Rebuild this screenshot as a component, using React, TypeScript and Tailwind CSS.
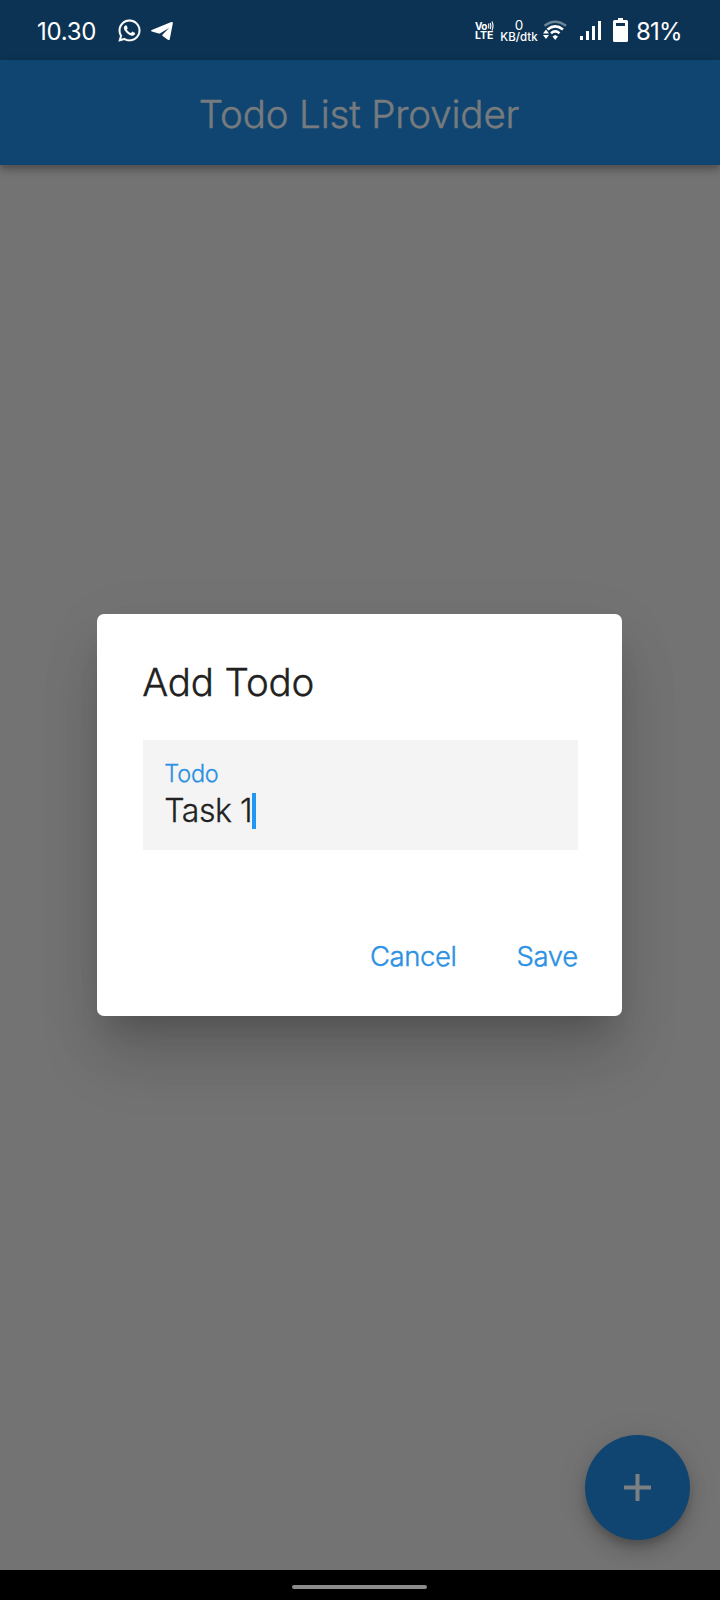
import { FaWhatsapp } from "react-icons/fa";

function StatusBar() {
  return (
    <div className="flex h-[60px] shrink-0 items-center bg-[#0c3353] pl-[37px] pt-[2px] text-white">
      <span className="mt-[2px] w-[80px] whitespace-nowrap text-[24px] leading-[28px] tracking-[-0.3px]">10.30</span>
      <FaWhatsapp className="-mt-[2px] size-[25px] shrink-0" stroke="currentColor" strokeWidth="4" />
      <svg className="ml-[9px] h-[20px] w-[23px] shrink-0" viewBox="0 0 23 20" fill="currentColor">
        <path d="M.7 9 20.300 1c1-.4 1.800.2 1.500 1.400l-3 15.500c-.2 1.200-1 1.500-2 .9l-5.200-3.900c-.5-.4-.5-.8 0-1.300l6.700-6.800-9 5.400q-.7.4-1.500.2L.8 10.500C0 10.200 0 9.300.7 9z" />
      </svg>
      <div className="ml-[301px] flex w-[20px] shrink-0 flex-col text-[10.500px] font-bold leading-[10px]">
        <svg className="h-[10px] w-[20px]" viewBox="0 0 20 10" fill="none" stroke="currentColor">
          <text x="0" y="8.700" fill="currentColor" stroke="none" fontSize="10" fontWeight="700" letterSpacing="-0.6">Vo</text>
          <path d="M13.700 2.500v5M15.300 2q1.300 3 0 6M17 .5q2 4.500 0 9" strokeWidth="1.100" />
        </svg>
        <span>LTE</span>
      </div>
      <div className="ml-[4px] flex w-[40px] shrink-0 flex-col items-center whitespace-nowrap">
        <span className="text-[13.500px] leading-[12px]">0</span>
        <span className="text-[11.500px] font-medium leading-[12px]">KB/dtk</span>
      </div>
      <svg className="ml-[4px] h-[22px] w-[26px] shrink-0" viewBox="0 0 26 22" fill="none" stroke="currentColor">
        <path d="M1.500 5.800Q12-2.500 23 5.800" strokeWidth="2.400" opacity=".4" />
        <path d="M4.500 9.500Q12.200 3.200 20 9.500M8 13.200Q12.200 9.500 16.500 13.200" strokeWidth="2.600" />
        <path d="m9.500 16.500 2.700-1.500 2.800 1.500-2.800 3.500zM0 13.500l3-4 3 4zM0 15h6l-3 4z" fill="currentColor" stroke="none" />
      </svg>
      <svg className="-mt-[3px] ml-[11px] h-[20px] w-[22px] shrink-0" viewBox="0 0 22 20" fill="currentColor">
        <path d="M0 16h3v4H0zM6 11h3v9H6zM12 6h3v14h-3zM18 1h3v19h-3z" />
      </svg>
      <svg className="-mt-[2px] ml-[11px] h-[24px] w-[15px] shrink-0" viewBox="0 0 15 24">
        <path d="M5 0h5v2h3.500q1.500 0 1.500 1.500v19q0 1.500-1.500 1.500h-12Q0 24 0 22.500v-19Q0 2 1.500 2H5z" fill="#fff" />
        <path d="M3 5h9v3H3z" fill="#0c3353" />
      </svg>
      <span className="ml-[8px] mt-[2px] text-[24px] leading-[28px] tracking-[-0.8px]">81%</span>
    </div>
  );
}

function AddTodoDialog() {
  return (
    <div role="dialog" className="mr-[1px] flex h-[401.500px] w-[525.500px] flex-col rounded-[7px] bg-white pl-[46px] pr-[44.500px] shadow-[0_21px_28px_-13px_rgba(0,0,0,0.16),0_45px_60px_0px_rgba(0,0,0,0.13),0_17px_70px_2px_rgba(0,0,0,0.06)]">
      <h2 className="-ml-[0.500px] mt-[45px] h-[46px] whitespace-nowrap text-[38.500px] font-light leading-[46px] tracking-[-0.150px] text-[#212121] [-webkit-text-stroke:0.4px]">Add Todo</h2>
      <div className="mt-[35px] flex h-[110px] shrink-0 flex-col bg-[#f4f4f4] px-[21.500px] pt-[18px]">
        <label className="h-[34px] text-[23.500px] font-light leading-[32px] tracking-[-0.200px] text-[#2b91e2] [-webkit-text-stroke:0.3px]">Todo</label>
        <div className="flex h-[38px] items-center">
          <span className="whitespace-nowrap text-[32px] font-light leading-[38px] tracking-[-0.450px] text-[#212121] [-webkit-text-stroke:0.3px]">Task 1</span>
          <span className="h-[36px] w-[4px] bg-[#2196f3]" />
        </div>
      </div>
      <div className="mt-[88px] flex justify-end gap-[60px] text-[27.500px] font-light leading-[36px] tracking-[-0.400px] text-[#2b91e2] [-webkit-text-stroke:0.4px]">
        <button>Cancel</button>
        <button>Save</button>
      </div>
    </div>
  );
}

export default function App() {
  return (
    <div className="flex h-[1600px] w-[720px] flex-col overflow-hidden bg-[#737373] font-['Inter',sans-serif]">
      <StatusBar />
      <header className="flex h-[105px] shrink-0 items-center justify-center bg-[#104571] pr-[2px] pt-[2px] shadow-[0_4px_8px_rgba(0,0,0,0.35)]">
        <h1 className="whitespace-nowrap text-[38.500px] font-light leading-[46px] tracking-[-0.150px] text-[#777b7e] [-webkit-text-stroke:0.5px]">Todo List Provider</h1>
      </header>
      <main className="flex flex-1 flex-col items-center pt-[449px]">
        <AddTodoDialog />
        <button aria-label="Add" className="mr-[30px] mt-[419.500px] flex size-[105px] items-center justify-center self-end rounded-full bg-[#104571] shadow-[0_7px_9px_-2px_rgba(0,0,0,0.18),0_11px_19px_rgba(0,0,0,0.14),0_2px_34px_rgba(0,0,0,0.08)]">
          <svg className="size-[27px]" viewBox="0 0 27 27" fill="#7c8082">
            <path d="M11.500 0h4v11.500H27v4H15.500V27h-4V15.500H0v-4h11.500z" />
          </svg>
        </button>
      </main>
      <nav className="flex h-[30px] shrink-0 items-center justify-center bg-black pt-[4px]">
        <div className="mr-[1px] h-[4px] w-[135px] rounded-full bg-[#8b8b8b]" />
      </nav>
    </div>
  );
}
